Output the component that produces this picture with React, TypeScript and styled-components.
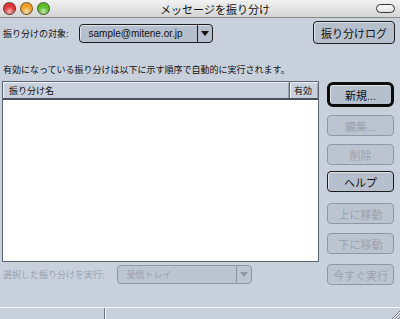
import styled, { createGlobalStyle } from "styled-components";

const GlobalStyle = createGlobalStyle`
  html, body {
    margin: 0;
    padding: 0;
    background: #c8d0dc;
  }
  body {
    font-family: "Liberation Sans", "Noto Sans CJK JP", sans-serif;
    -webkit-font-smoothing: antialiased;
  }
`;

const buttons = [
  { label: "新規...", mt: 0, variant: "default" },
  { label: "編集...", mt: 8, variant: "disabled" },
  { label: "削除", mt: 8, variant: "disabled" },
  { label: "ヘルプ", mt: 6, variant: "normal" },
  { label: "上に移動", mt: 11, variant: "disabled" },
  { label: "下に移動", mt: 9, variant: "disabled" },
  { label: "今すぐ実行", mt: 10, variant: "disabled" },
];

function App() {
  return (
    <>
      <GlobalStyle />
      <Window>
        <TitleBar>
          <Lights>
            <Light $color="#e23a3a" />
            <Light $color="#eea12a" />
            <Light $color="#5fbf2c" />
          </Lights>
          <Title>メッセージを振り分け</Title>
          <Pill />
        </TitleBar>

        <Content>
          <TopRow>
            <Label>振り分けの対象:</Label>
            <Popup $width={134}>
              <PopupText>sample@mitene.or.jp</PopupText>
              <PopupArrow>
                <Triangle />
              </PopupArrow>
            </Popup>
            <Spacer />
            <PushButton $w={80} $h={21}>振り分けログ</PushButton>
          </TopRow>

          <Info>有効になっている振り分けは以下に示す順序で自動的に実行されます。</Info>

          <Main>
            <LeftColumn>
              <List>
                <ListHeader>
                  <HeaderCell $grow>振り分け名</HeaderCell>
                  <HeaderCell>有効</HeaderCell>
                </ListHeader>
              </List>
              <BottomRow>
                <Label $disabled>選択した振り分けを実行:</Label>
                <Popup $width={135} $disabled>
                  <PopupText $disabled>受信トレイ</PopupText>
                  <PopupArrow $disabled>
                    <Triangle $disabled />
                  </PopupArrow>
                </Popup>
              </BottomRow>
            </LeftColumn>

            <ButtonColumn>
              {buttons.map((b) => (
                <SideButton key={b.label} $mt={b.mt} $variant={b.variant}>
                  {b.label}
                </SideButton>
              ))}
            </ButtonColumn>
          </Main>
        </Content>

        <StatusBar>
          <StatusCell $w={104} />
          <StatusCell $grow>
            <Grip>
              <svg width="10" height="10" viewBox="0 0 10 10">
                <path d="M2 10 L10 2 M5 10 L10 5 M8 10 L10 8" stroke="#6b7280" strokeWidth="1" />
                <path d="M3 10 L10 3 M6 10 L10 6" stroke="#ffffff" strokeWidth="1" />
              </svg>
            </Grip>
          </StatusCell>
        </StatusBar>
      </Window>
    </>
  );
}

const Window = styled.div`
  width: 400px;
  height: 319px;
  display: flex;
  flex-direction: column;
  background: #c8d0dc;
  overflow: hidden;
`;

const TitleBar = styled.div`
  height: 17px;
  display: flex;
  align-items: center;
  padding: 0 5px 0 3px;
  background: linear-gradient(#f2f2f2, #d4d4d4);
  border-bottom: 1px solid #8a8a8a;
`;

const Lights = styled.div`
  display: flex;
  gap: 4px;
`;

const Light = styled.div<{ $color: string }>`
  width: 13px;
  height: 13px;
  border-radius: 50%;
  box-sizing: border-box;
  border: 1px solid rgba(0, 0, 0, 0.45);
  background: radial-gradient(circle at 50% 75%, #ffffffaa 0, transparent 45%),
    radial-gradient(circle at 50% 30%, ${(p) => p.$color} 0, ${(p) => p.$color} 60%, #00000055 100%);
`;

const Title = styled.div`
  flex: 1;
  text-align: center;
  font-size: 11px;
  color: #111;
  padding-left: 4px;
`;

const Pill = styled.div`
  width: 17px;
  height: 7px;
  border: 1px solid #333;
  border-radius: 5px;
  background: linear-gradient(#ffffff, #e0e0e0);
`;

const Content = styled.div`
  flex: 1;
  display: flex;
  flex-direction: column;
  padding: 4px 5px 0 2px;
`;

const TopRow = styled.div`
  display: flex;
  align-items: center;
  height: 23px;
`;

const Label = styled.span<{ $disabled?: boolean }>`
  font-size: 9px;
  color: ${(p) => (p.$disabled ? "#9aa2ae" : "#111")};
  margin: 0 10px 0 1px;
  white-space: nowrap;
`;

const Popup = styled.div<{ $width: number; $disabled?: boolean }>`
  width: ${(p) => p.$width}px;
  height: 19px;
  box-sizing: border-box;
  display: flex;
  border: 1px solid ${(p) => (p.$disabled ? "#8e97a5" : "#1c1c1c")};
  border-radius: 4px;
  background: ${(p) => (p.$disabled ? "#bcc4d0" : "#b6bfcc")};
  box-shadow: ${(p) => (p.$disabled ? "none" : "inset 1px 1px 0 #dfe4ec")};
`;

const PopupText = styled.div<{ $disabled?: boolean }>`
  flex: 1;
  display: flex;
  align-items: center;
  padding-left: 9px;
  font-size: ${(p) => (p.$disabled ? 9 : 10)}px;
  color: ${(p) => (p.$disabled ? "#9aa2ae" : "#111")};
`;

const PopupArrow = styled.div<{ $disabled?: boolean }>`
  width: 14px;
  display: flex;
  align-items: center;
  justify-content: center;
  border-left: 1px solid ${(p) => (p.$disabled ? "#8e97a5" : "#1c1c1c")};
`;

const Triangle = styled.div<{ $disabled?: boolean }>`
  width: 0;
  height: 0;
  border-left: 4px solid transparent;
  border-right: 4px solid transparent;
  border-top: 5px solid ${(p) => (p.$disabled ? "#8e97a5" : "#111")};
`;

const Spacer = styled.div`
  flex: 1;
`;

const PushButton = styled.div<{ $w: number; $h: number }>`
  width: ${(p) => p.$w}px;
  height: ${(p) => p.$h}px;
  display: flex;
  align-items: center;
  justify-content: center;
  border: 1px solid #1c1c1c;
  border-radius: 4px;
  background: #b6bfcc;
  box-shadow: inset 1px 1px 0 #dfe4ec;
  font-size: 11px;
  color: #111;
  margin-top: -2px;
`;

const Info = styled.div`
  font-size: 9px;
  color: #111;
  margin: 19px 0 0 1px;
  height: 12px;
  line-height: 12px;
`;

const Main = styled.div`
  display: flex;
  gap: 8px;
  margin-top: 5px;
`;

const LeftColumn = styled.div`
  width: 317px;
  display: flex;
  flex-direction: column;
`;

const List = styled.div`
  height: 181px;
  box-sizing: border-box;
  border: 1px solid #5c6470;
  background: #ffffff;
`;

const ListHeader = styled.div`
  display: flex;
  height: 18px;
  box-sizing: border-box;
  background: #c8d0dc;
  border-bottom: 2px solid #4a515c;
`;

const HeaderCell = styled.div<{ $grow?: boolean }>`
  flex: ${(p) => (p.$grow ? 1 : "0 0 29px")};
  font-size: 9px;
  color: #111;
  padding: 2px 0 0 ${(p) => (p.$grow ? 6 : 4)}px;
  box-sizing: border-box;
  border-left: ${(p) => (p.$grow ? "none" : "1px solid #5c6470")};
  box-shadow: inset 1px 1px 0 #eef1f5, inset -1px 0 0 #9aa2ae;
`;

const BottomRow = styled.div`
  display: flex;
  align-items: center;
  margin-top: 2px;
  height: 21px;
  & > span {
    margin-right: 12px;
  }
`;

const ButtonColumn = styled.div`
  display: flex;
  flex-direction: column;
  width: 67px;
  padding-top: 1px;
`;

const SideButton = styled.div<{ $mt: number; $variant: string }>`
  margin-top: ${(p) => p.$mt}px;
  height: ${(p) => (p.$variant === "default" ? 25 : 21)}px;
  box-sizing: border-box;
  display: flex;
  align-items: center;
  justify-content: center;
  border-radius: ${(p) => (p.$variant === "default" ? 6 : 4)}px;
  font-size: 11px;
  border: ${(p) =>
    p.$variant === "default"
      ? "3px solid #0c0c0c"
      : p.$variant === "normal"
      ? "1px solid #1c1c1c"
      : "1px solid #8e97a5"};
  background: ${(p) => (p.$variant === "disabled" ? "#bcc4d0" : "#b6bfcc")};
  color: ${(p) => (p.$variant === "disabled" ? "#9aa2ae" : "#111")};
  box-shadow: ${(p) => (p.$variant === "disabled" ? "none" : "inset 1px 1px 0 #dfe4ec")};
`;

const StatusBar = styled.div`
  height: 11px;
  display: flex;
  border-top: 1px solid #f4f6f9;
  background: #c8d0dc;
`;

const StatusCell = styled.div<{ $w?: number; $grow?: boolean }>`
  ${(p) => (p.$grow ? "flex: 1;" : `width: ${p.$w}px;`)}
  position: relative;
  & + & {
    border-left: 1px solid #6b7280;
    box-shadow: inset 1px 0 0 #f4f6f9;
  }
`;

const Grip = styled.div`
  position: absolute;
  right: 0;
  bottom: 0;
  width: 10px;
  height: 10px;
  display: flex;
`;

export default App;
